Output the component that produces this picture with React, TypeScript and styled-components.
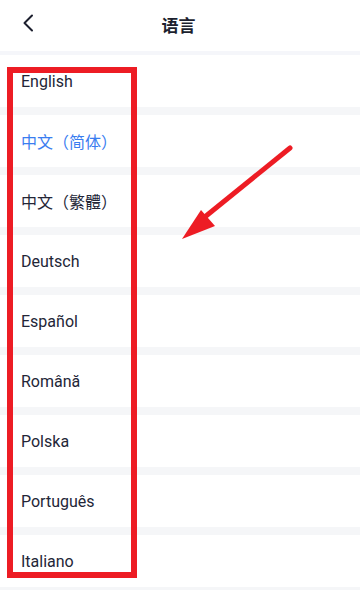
import styled, { createGlobalStyle } from "styled-components";

const GlobalStyle = createGlobalStyle`
	html, body {
		margin: 0;
		padding: 0;
		background: #fff;
	}
	body {
		font-family: Roboto, "Noto Sans CJK SC", sans-serif;
	}
`;

const Page = styled.div`
	position: relative;
	width: 360px;
	height: 590px;
	overflow: hidden;
	background: #fff;
`;

const Header = styled.div`
	height: 51px;
	display: flex;
	align-items: center;
	justify-content: center;
	position: relative;
	border-bottom: 4px solid #f5f6fa;
`;

const BackButton = styled.div`
	position: absolute;
	left: 18px;
	top: 13px;
	width: 20px;
	height: 20px;
	display: flex;
	align-items: center;
	justify-content: center;
`;

const Title = styled.div`
	font-size: 17px;
	font-weight: 700;
	color: #1c1f2e;
	margin-top: -2px;
	margin-left: -3px;
`;

const List = styled.div`
	display: flex;
	flex-direction: column;
`;

const Row = styled.div<{ $active?: boolean }>`
	height: 52px;
	display: flex;
	align-items: center;
	padding-left: 21px;
	font-size: 16px;
	color: ${(p) => (p.$active ? "#3a7df0" : "#232637")};
	border-bottom: 8px solid #f5f6f8;
`;

const Frame = styled.div`
	position: absolute;
	left: 7px;
	top: 67px;
	width: 130px;
	height: 511px;
	box-sizing: border-box;
	border: 6px solid #ed1c24;
`;

const Overlay = styled.svg`
	position: absolute;
	left: 0;
	top: 0;
	pointer-events: none;
`;

const languages = [
	"English",
	"中文（简体）",
	"中文（繁體）",
	"Deutsch",
	"Español",
	"Română",
	"Polska",
	"Português",
	"Italiano",
];

const App = () => {
	return (
		<Page>
			<GlobalStyle />
			<Header>
				<BackButton>
					<svg width="12" height="18" viewBox="0 0 12 18">
						<path
							d="M10 1.5 L2.5 9 L10 16.5"
							fill="none"
							stroke="#1c1f2e"
							strokeWidth="2"
							strokeLinecap="round"
							strokeLinejoin="round"
						/>
					</svg>
				</BackButton>
				<Title>语言</Title>
			</Header>
			<List>
				{languages.map((lang) => (
					<Row key={lang} $active={lang === "中文（简体）"}>
						{lang}
					</Row>
				))}
			</List>
			<Frame />
			<Overlay width="360" height="590" viewBox="0 0 360 590">
				<line
					x1="290"
					y1="148"
					x2="206"
					y2="216"
					stroke="#ed1c24"
					strokeWidth="5"
					strokeLinecap="round"
				/>
				<polygon points="182,239 201,210 215,226" fill="#ed1c24" />
			</Overlay>
		</Page>
	);
};

export default App;
